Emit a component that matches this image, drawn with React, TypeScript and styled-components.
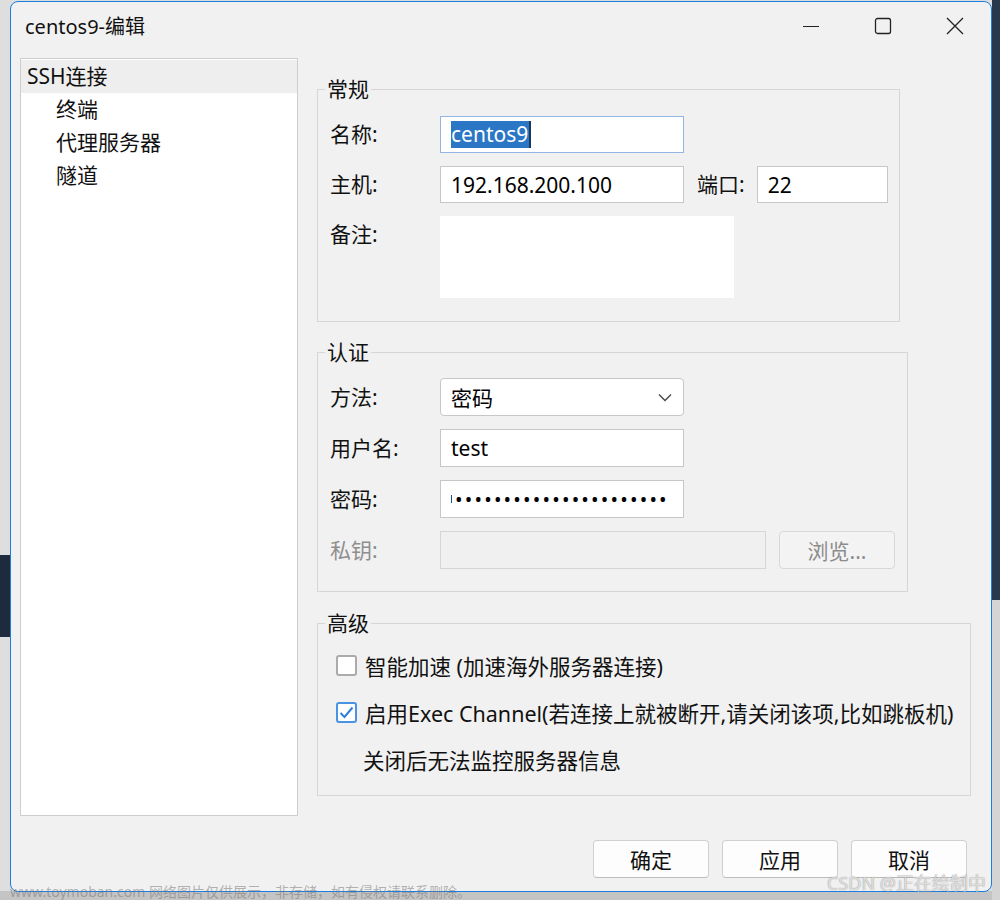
import React from "react";
import styled, { createGlobalStyle } from "styled-components";

const GlobalStyle = createGlobalStyle`
  html, body { margin: 0; padding: 0; }
  body {
    width: 1000px;
    height: 900px;
    overflow: hidden;
    font-family: "Noto Sans", "Noto Sans CJK SC", sans-serif;
    color: #111;
  }
  * { box-sizing: border-box; }
`;

const Desktop = styled.div`
  position: relative;
  width: 1000px;
  height: 900px;
  padding: 1px 0 0 10px;
  overflow: hidden;
  background:
    linear-gradient(to right, transparent 992px, #27394a 992px) top / 100% 600px no-repeat,
    linear-gradient(to right, transparent 992px, #d4d4d4 992px) 0 600px / 100% 300px no-repeat,
    linear-gradient(#1d2b3c, #1d2b3c) 0 555px / 10px 82px no-repeat,
    linear-gradient(#c4c4c4, #c4c4c4) bottom / 100% 9px no-repeat,
    #dedede;
`;

const Dialog = styled.div`
  width: 982px;
  height: 891px;
  border: 1px solid #1b7ddf;
  border-radius: 8px;
  background: #f1f1f1;
  display: flex;
  flex-direction: column;
  overflow: hidden;
`;

const TitleBar = styled.div`
  height: 56px;
  flex: none;
  display: flex;
  align-items: flex-start;
`;

const Title = styled.div`
  flex: 1;
  height: 50px;
  line-height: 50px;
  padding-left: 14px;
  font-size: 20px;
  color: #111;
`;

const Controls = styled.div`
  display: flex;
`;

const ControlButton = styled.div`
  width: 72px;
  height: 48px;
  display: flex;
  align-items: center;
  justify-content: center;
`;

const Body = styled.div`
  height: 758px;
  flex: none;
  display: flex;
  gap: 19px;
  padding-left: 9px;
`;

const NavPanel = styled.div`
  width: 278px;
  height: 758px;
  border: 1px solid #cdcdcd;
  background: #fff;
  padding-top: 1px;
`;

const NavItem = styled.div<{ $child?: boolean; $active?: boolean }>`
  height: 33px;
  line-height: 33px;
  font-size: 21px;
  padding-left: ${(p) => (p.$child ? 35 : 6)}px;
  background: ${(p) => (p.$active ? "#eeeeee" : "transparent")};
  color: #111;
`;

const RightColumn = styled.div`
  display: flex;
  flex-direction: column;
`;

const Group = styled.div<{ $w: number; $top: number; $pt: number; $pb: number }>`
  position: relative;
  width: ${(p) => p.$w}px;
  margin-top: ${(p) => p.$top}px;
  border: 1px solid #d6d6d6;
  padding: ${(p) => p.$pt}px 0 ${(p) => p.$pb}px 12px;
  display: flex;
  flex-direction: column;
`;

const Legend = styled.span`
  position: absolute;
  top: -13px;
  left: 7px;
  padding: 0 2px;
  line-height: 24px;
  font-size: 21px;
  background: #f1f1f1;
  color: #111;
`;

const Rows = styled.div<{ $gap: number }>`
  display: flex;
  flex-direction: column;
  gap: ${(p) => p.$gap}px;
`;

const Row = styled.div`
  display: flex;
  align-items: flex-start;
`;

const Label = styled.div<{ $h: number; $disabled?: boolean; $w?: number }>`
  width: ${(p) => (p.$w ? `${p.$w}px` : "110px")};
  flex: none;
  line-height: ${(p) => p.$h}px;
  font-size: 21px;
  color: ${(p) => (p.$disabled ? "#8e8e8e" : "#111")};
  white-space: nowrap;
`;

const Field = styled.div<{ $w: number; $h: number; $focus?: boolean; $disabled?: boolean; $plain?: boolean; $round?: boolean }>`
  width: ${(p) => p.$w}px;
  height: ${(p) => p.$h}px;
  flex: none;
  border: 1px solid
    ${(p) => (p.$plain ? "#ffffff" : p.$focus ? "#92b5e3" : p.$disabled ? "#d6d6d6" : "#c7c7c7")};
  border-radius: ${(p) => (p.$round ? 4 : 0)}px;
  background: ${(p) => (p.$disabled ? "#f0f0f0" : "#fff")};
  padding-left: 10px;
  display: flex;
  align-items: center;
  font-size: 21px;
  color: #000;
  white-space: nowrap;
  overflow: hidden;
`;

const SelectField = styled(Field)`
  justify-content: space-between;
  padding-right: 11px;
`;

const Selected = styled.span`
  display: inline-block;
  background: #2b77c5;
  color: #fff;
  line-height: 27px;
  padding-right: 1px;
  border-right: 2px solid #173a60;
`;

const Caret = styled.span`
  display: inline-block;
  width: 1px;
  height: 8px;
  background: #1a5590;
  margin-right: 3px;
`;

const Dots = styled.span`
  font-size: 20px;
  letter-spacing: 2.2px;
  color: #000;
`;

const PortLabel = styled(Label)`
  margin-left: 13px;
  width: auto;
  margin-right: 12px;
`;

const SmallButton = styled.div<{ $disabled?: boolean }>`
  width: 116px;
  height: 38px;
  margin-left: 13px;
  border: 1px solid #d8d8d8;
  border-radius: 4px;
  background: ${(p) => (p.$disabled ? "#f3f3f3" : "#fdfdfd")};
  color: ${(p) => (p.$disabled ? "#8c8c8c" : "#111")};
  font-size: 21px;
  display: flex;
  align-items: center;
  justify-content: center;
`;

const CheckRow = styled.div<{ $indent?: boolean }>`
  height: 47px;
  display: flex;
  align-items: center;
  gap: 8px;
  padding-left: ${(p) => (p.$indent ? 33 : 6)}px;
  font-size: 21.5px;
  color: #111;
  white-space: nowrap;
`;

const Box = styled.div<{ $checked?: boolean }>`
  width: 21px;
  height: 21px;
  flex: none;
  border: 2px solid ${(p) => (p.$checked ? "#4a92e4" : "#ababab")};
  border-radius: 3px;
  background: #fff;
  display: flex;
  align-items: center;
  justify-content: center;
`;

const Footer = styled.div`
  flex: none;
  display: flex;
  justify-content: flex-end;
  gap: 13px;
  padding: 24px 24px 12px 0;
`;

const Button = styled.div`
  width: 116px;
  height: 38px;
  border: 1px solid #d0d0d0;
  border-bottom-color: #bcbcbc;
  border-radius: 4px;
  background: #fdfdfd;
  font-size: 21px;
  color: #111;
  display: flex;
  align-items: center;
  justify-content: center;
`;

const WatermarkLeft = styled.div`
  position: absolute;
  left: 10px;
  bottom: 0;
  font-size: 14px;
  line-height: 16px;
  color: rgba(120, 120, 120, 0.55);
  white-space: nowrap;
`;

const WatermarkRight = styled.div`
  position: absolute;
  right: 14px;
  bottom: 6px;
  font-size: 18px;
  line-height: 22px;
  color: rgba(255, 255, 255, 0.75);
  text-shadow: 0 0 1px rgba(0, 0, 0, 0.55);
  white-space: nowrap;
`;

export default function App() {
  return (
    <>
      <GlobalStyle />
      <Desktop>
        <Dialog>
          <TitleBar>
            <Title>centos9-编辑</Title>
            <Controls>
              <ControlButton>
                <svg width="18" height="18" viewBox="0 0 18 18">
                  <line x1="1" y1="9.5" x2="17" y2="9.5" stroke="#222" strokeWidth="1.1" />
                </svg>
              </ControlButton>
              <ControlButton>
                <svg width="18" height="18" viewBox="0 0 18 18">
                  <rect x="1.5" y="1.5" width="15" height="15" rx="2" fill="none" stroke="#222" strokeWidth="1.3" />
                </svg>
              </ControlButton>
              <ControlButton>
                <svg width="18" height="18" viewBox="0 0 18 18">
                  <path d="M1 1 L17 17 M17 1 L1 17" stroke="#222" strokeWidth="1.3" fill="none" />
                </svg>
              </ControlButton>
            </Controls>
          </TitleBar>
          <Body>
            <NavPanel>
              <NavItem $active>SSH连接</NavItem>
              <NavItem $child>终端</NavItem>
              <NavItem $child>代理服务器</NavItem>
              <NavItem $child>隧道</NavItem>
            </NavPanel>
            <RightColumn>
              <Group $w={583} $top={31} $pt={26} $pb={23}>
                <Legend>常规</Legend>
                <Rows $gap={13}>
                  <Row>
                    <Label $h={37}>名称:</Label>
                    <Field $w={244} $h={37} $focus>
                      <Selected>centos9</Selected>
                    </Field>
                  </Row>
                  <Row>
                    <Label $h={37}>主机:</Label>
                    <Field $w={244} $h={37}>192.168.200.100</Field>
                    <PortLabel $h={37}>端口:</PortLabel>
                    <Field $w={131} $h={37}>22</Field>
                  </Row>
                  <Row>
                    <Label $h={37}>备注:</Label>
                    <Field $w={294} $h={82} $plain />
                  </Row>
                </Rows>
              </Group>
              <Group $w={591} $top={30} $pt={25} $pb={22}>
                <Legend>认证</Legend>
                <Rows $gap={13}>
                  <Row>
                    <Label $h={38}>方法:</Label>
                    <SelectField $w={244} $h={38} $round>
                      <span>密码</span>
                      <svg width="14" height="9" viewBox="0 0 14 9">
                        <polyline points="1,1.5 7,7.5 13,1.5" fill="none" stroke="#444" strokeWidth="1.3" />
                      </svg>
                    </SelectField>
                  </Row>
                  <Row>
                    <Label $h={38}>用户名:</Label>
                    <Field $w={244} $h={38}>test</Field>
                  </Row>
                  <Row>
                    <Label $h={38}>密码:</Label>
                    <Field $w={244} $h={38}>
                      <Caret />
                      <Dots>{"•".repeat(22)}</Dots>
                    </Field>
                  </Row>
                  <Row>
                    <Label $h={38} $disabled>私钥:</Label>
                    <Field $w={326} $h={38} $disabled />
                    <SmallButton $disabled>浏览...</SmallButton>
                  </Row>
                </Rows>
              </Group>
              <Group $w={654} $top={31} $pt={18} $pb={12}>
                <Legend>高级</Legend>
                <CheckRow>
                  <Box />
                  智能加速 (加速海外服务器连接)
                </CheckRow>
                <CheckRow>
                  <Box $checked>
                    <svg width="15" height="13" viewBox="0 0 15 13">
                      <polyline points="1.5,7 5.5,11 13.5,1.5" fill="none" stroke="#2f7fd8" strokeWidth="2" />
                    </svg>
                  </Box>
                  启用Exec Channel(若连接上就被断开,请关闭该项,比如跳板机)
                </CheckRow>
                <CheckRow $indent>关闭后无法监控服务器信息</CheckRow>
              </Group>
            </RightColumn>
          </Body>
          <Footer>
            <Button>确定</Button>
            <Button>应用</Button>
            <Button>取消</Button>
          </Footer>
        </Dialog>
        <WatermarkLeft>www.toymoban.com 网络图片仅供展示，非存储，如有侵权请联系删除。</WatermarkLeft>
        <WatermarkRight>CSDN @正在绘制中</WatermarkRight>
      </Desktop>
    </>
  );
}
